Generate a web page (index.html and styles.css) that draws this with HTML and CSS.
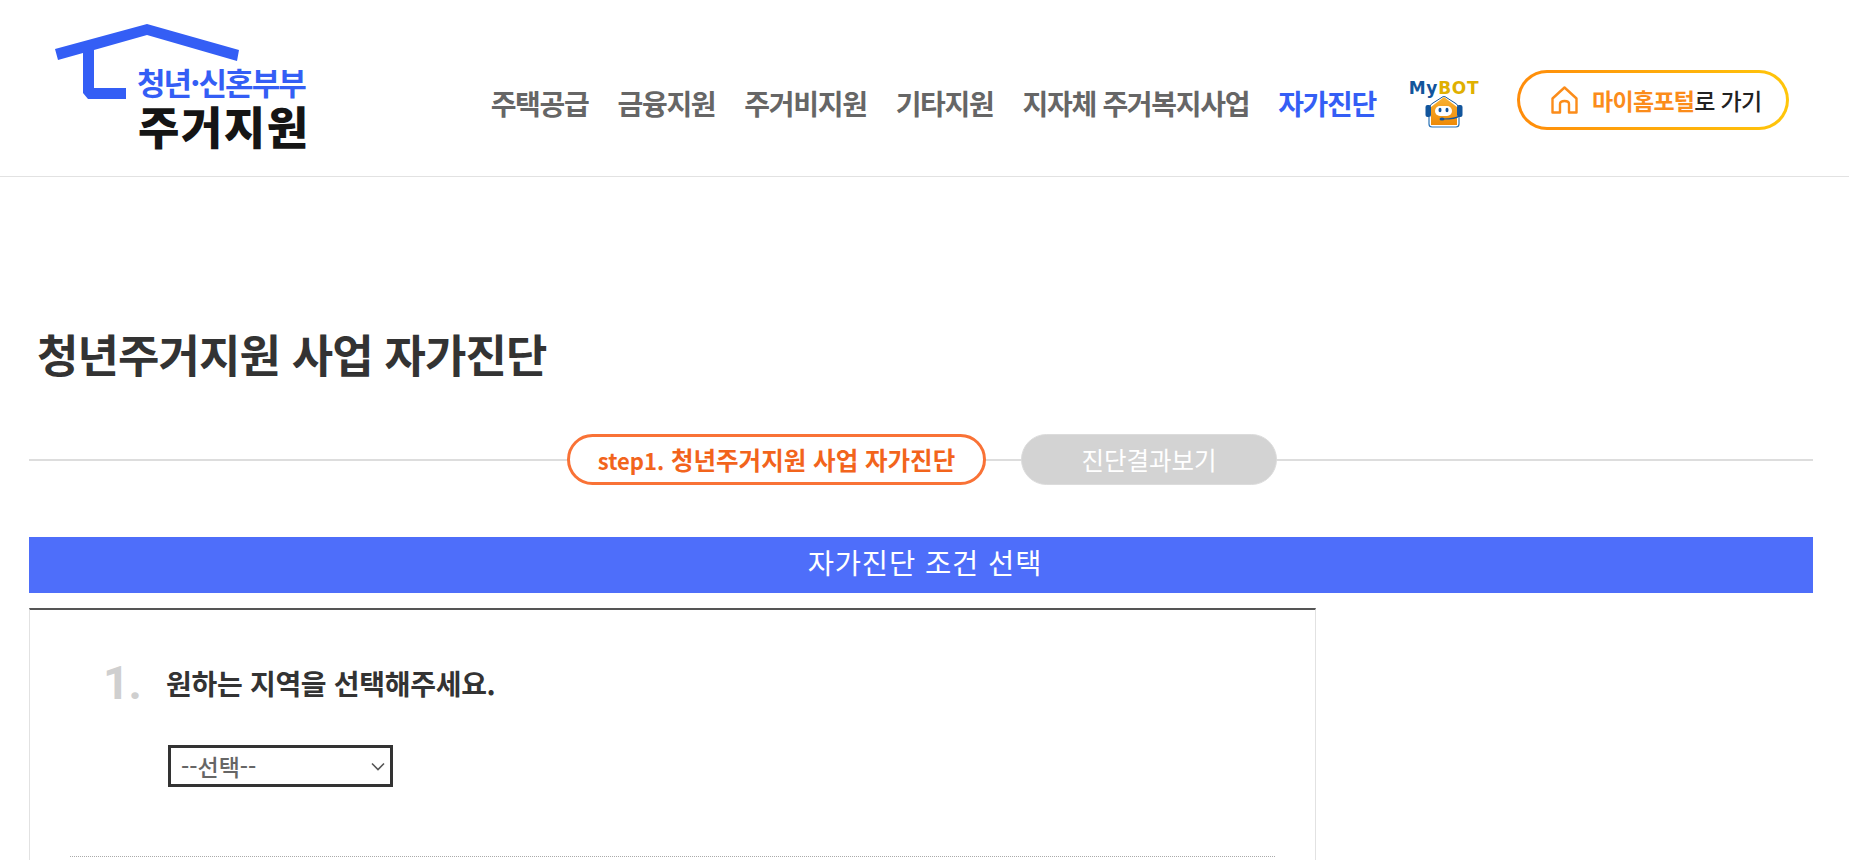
FILE: index.html
```html
<!DOCTYPE html>
<html lang="ko">
<head>
<meta charset="utf-8">
<title>청년주거지원 사업 자가진단</title>
<link rel="stylesheet" href="styles.css">
</head>
<body>
<header class="header">
  <a class="logo">
    <svg class="logo-roof" width="190" height="80" viewBox="0 0 190 80"><path fill="#345ef5" d="M0 25 L92 0 L184 26 L182 37 L92 11 L39 26 L39 64 L71 64 L71 75 L33 75 L28 69 L28 29 L3 36 Z"/></svg>
    <span class="logo-sub">청년·신혼부부</span>
    <span class="logo-main">주거지원</span>
  </a>
  <nav class="nav">
    <a class="nav-item">주택공급</a>
    <a class="nav-item">금융지원</a>
    <a class="nav-item">주거비지원</a>
    <a class="nav-item">기타지원</a>
    <a class="nav-item">지자체 주거복지사업</a>
    <a class="nav-item nav-active">자가진단</a>
    <a class="mybot">
      <span class="mybot-title"><span class="my">My</span><span class="bot">BOT</span></span>
      <svg width="38" height="32" viewBox="0 0 38 32">
        <defs><linearGradient id="mybot-fill" x1="0" y1="0" x2="0" y2="1"><stop offset="0" stop-color="#f9b233"/><stop offset="1" stop-color="#ee8a08"/></linearGradient></defs>
        <path d="M4 21v7q0 3 3 3h24q3 0 3-3v-7" fill="none" stroke="#2a72b5" stroke-width="1.200"/>
        <path d="M5 10 Q6 8 8 7 L19 0 L30 7 Q32 8 33 10" fill="none" stroke="#12559c" stroke-width="1"/>
        <path d="M19 1 L32 11 V29 H6 V11 Z" fill="url(#mybot-fill)"/>
        <rect x="0.500" y="9" width="5.500" height="12" rx="2" fill="#12559c"/>
        <rect x="32" y="9" width="5.500" height="12" rx="2" fill="#12559c"/>
        <rect x="10" y="10" width="17" height="10" rx="5" fill="#fff"/>
        <ellipse cx="15" cy="14" rx="1.500" ry="2.200" fill="#12559c"/>
        <ellipse cx="22" cy="14" rx="1.500" ry="2.200" fill="#12559c"/>
        <path d="M34 20 Q31 23 18 23" fill="none" stroke="#12559c" stroke-width="1.200"/>
        <ellipse cx="17" cy="23" rx="2.500" ry="1.500" fill="#12559c"/>
      </svg>
    </a>
    <a class="portal">
      <svg width="27" height="28" viewBox="0 0 27 28"><path d="M1.500 12.500 L13.500 1.500 L25.500 12.500 V26.500 H18 V18 Q18 15 13.500 15 Q9 15 9 18 V26.500 H1.500 Z" fill="none" stroke="#fb8c1a" stroke-width="2.400" stroke-linejoin="round"/></svg>
      <span class="portal-text"><span class="portal-hi">마이홈포털</span>로 가기</span>
    </a>
  </nav>
</header>
<main class="main">
  <h1 class="title">청년주거지원 사업 자가진단</h1>
  <div class="steps">
    <span class="step step-on"><span class="step-label">step1.</span>&nbsp;청년주거지원 사업 자가진단</span>
    <span class="step step-off">진단결과보기</span>
  </div>
  <div class="bar">자가진단 조건 선택</div>
  <section class="card">
    <div class="question">
      <span class="q-num">1.</span>
      <span class="q-text">원하는 지역을 선택해주세요.</span>
    </div>
    <div class="select">
      <span>--선택--</span>
      <svg width="14" height="9" viewBox="0 0 14 9"><path d="M1 1.500 L7 7.500 L13 1.500" fill="none" stroke="#555" stroke-width="1.600"/></svg>
    </div>
    <div class="divider"></div>
  </section>
</main>
</body>
</html>
```
FILE: styles.css
```css
* { box-sizing: border-box; }
html, body { margin: 0; padding: 0; height: 860px; overflow: hidden; background: #fff; }
body { font-family: "Noto Sans CJK KR", "Noto Sans", sans-serif; color: #333; }

.header { height: 177px; border-bottom: 1px solid #e2e2e2; display: flex; justify-content: space-between; align-items: flex-start; padding: 0 60px 0 55px; }

.logo { position: relative; display: flex; flex-direction: column; width: 260px; height: 176px; padding: 65px 0 0 82px; }
.logo-roof { position: absolute; left: 0; top: 24px; }
.logo-sub { font-size: 31px; line-height: 34px; font-weight: 700; color: #345ef5; letter-spacing: -1.9px; white-space: nowrap; }
.logo-main { margin: 2px 0 0 1px; font-size: 45px; line-height: 50px; font-weight: 900; color: #151515; letter-spacing: 1.5px; white-space: nowrap; }

.nav { display: flex; align-items: center; height: 176px; padding-top: 30px; }
.nav-item { font-size: 28px; line-height: 40px; font-weight: 700; color: #666; letter-spacing: -1.3px; margin-right: 29px; white-space: nowrap; }
.nav-active { color: #345ef5; margin-right: 32px; }

.mybot { display: flex; flex-direction: column; align-items: center; gap: 2px; width: 72px; margin-right: 37px; margin-top: 3px; }
.mybot-title { font: 700 17px/12px "DejaVu Sans", sans-serif; letter-spacing: 0.7px; white-space: nowrap; }
.my { color: #12559c; }
.bot { color: #e0b000; }

.portal { display: flex; align-items: center; width: 272px; height: 60px; margin-top: -7px; padding-left: 31px; gap: 14px; border: 3px solid transparent; border-radius: 30px; background: linear-gradient(#fff, #fff) padding-box, linear-gradient(90deg, #ff8c0a, #ffc60a) border-box; }
.portal-text { font-size: 23px; line-height: 32px; font-weight: 500; color: #222; letter-spacing: -0.7px; white-space: nowrap; }
.portal-hi { color: #fb8c1a; font-weight: 700; }

.main { padding: 0 36px 0 29px; }
.title { margin: 145px 0 0 8px; font-size: 45px; line-height: 64px; font-weight: 700; color: #333; letter-spacing: -0.9px; }

.steps { display: flex; justify-content: center; gap: 35px; margin-top: 48px; padding-left: 2px; background: linear-gradient(#ddd, #ddd) 0 25px / 100% 2px no-repeat; height: 51px; }
.step { display: flex; align-items: center; justify-content: center; height: 51px; border-radius: 26px; font-size: 24.5px; white-space: nowrap; }
.step-on { width: 419px; border: 3px solid #f97236; background: #fff; color: #f2641c; font-weight: 700; }
.step-label { font-size: 22px; }
.step-off { width: 256px; background: #d3d3d3; border: 1px solid #dcdcdc; color: #fff; font-weight: 400; }

.bar { height: 56px; margin-top: 52px; padding-left: 8px; background: #4e6efa; color: #fff; font-size: 28.5px; line-height: 50px; text-align: center; letter-spacing: 0.9px; }

.card { width: 1287px; height: 252px; margin-top: 15px; border: 1px solid #e2e2e2; border-top: 2px solid #555; border-bottom: 0; padding: 0 40px; }
.question { display: flex; align-items: flex-start; margin-top: 41px; padding-left: 33px; }
.q-num { width: 63px; font: 700 46px/64px Roboto, sans-serif; color: #cfcfcf; letter-spacing: -1px; }
.q-text { margin-top: 12px; font-size: 28px; line-height: 40px; font-weight: 700; color: #333; letter-spacing: -0.3px; white-space: nowrap; }
.select { display: flex; align-items: center; justify-content: space-between; width: 225px; height: 42px; margin: 30px 0 0 98px; padding: 0 5px 0 10px; border: 3px solid #333; background: #fff; color: #666; font-size: 23px; font-weight: 500; }
.divider { margin-top: 69px; border-top: 1px dotted #aaa; }
```
